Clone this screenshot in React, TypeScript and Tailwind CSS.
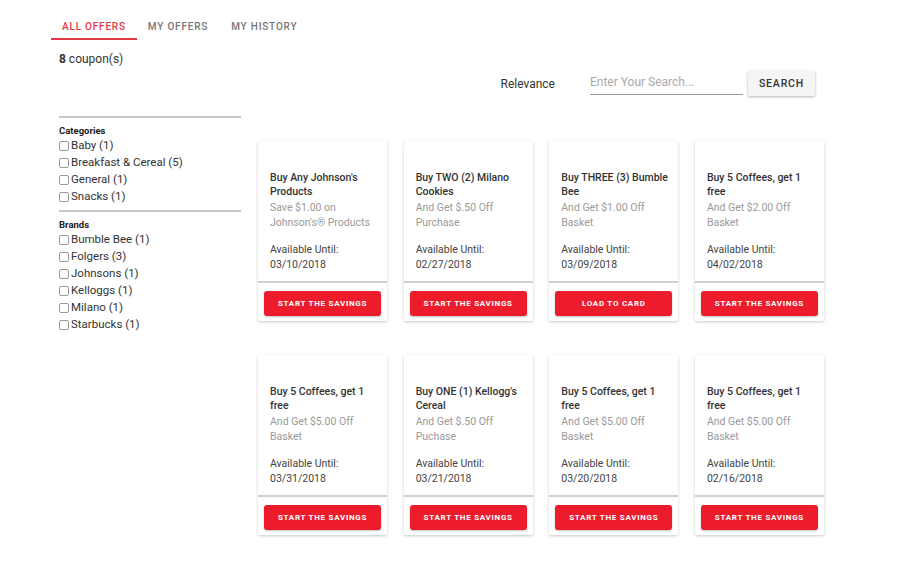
import React from 'react';

const categories = ['Baby (1)', 'Breakfast & Cereal (5)', 'General (1)', 'Snacks (1)'];
const brands = ['Bumble Bee (1)', 'Folgers (3)', 'Johnsons (1)', 'Kelloggs (1)', 'Milano (1)', 'Starbucks (1)'];

const coupons = [
  { title: "Buy Any Johnson's Products", desc: "Save $1.00 on Johnson's® Products", date: '03/10/2018', action: 'START THE SAVINGS' },
  { title: 'Buy TWO (2) Milano Cookies', desc: 'And Get $.50 Off Purchase', date: '02/27/2018', action: 'START THE SAVINGS' },
  { title: 'Buy THREE (3) Bumble Bee', desc: 'And Get $1.00 Off Basket', date: '03/09/2018', action: 'LOAD TO CARD' },
  { title: 'Buy 5 Coffees, get 1 free', desc: 'And Get $2.00 Off Basket', date: '04/02/2018', action: 'START THE SAVINGS' },
  { title: 'Buy 5 Coffees, get 1 free', desc: 'And Get $5.00 Off Basket', date: '03/31/2018', action: 'START THE SAVINGS' },
  { title: "Buy ONE (1) Kellogg's Cereal", desc: 'And Get $.50 Off Puchase', date: '03/21/2018', action: 'START THE SAVINGS' },
  { title: 'Buy 5 Coffees, get 1 free', desc: 'And Get $5.00 Off Basket', date: '03/20/2018', action: 'START THE SAVINGS' },
  { title: 'Buy 5 Coffees, get 1 free', desc: 'And Get $5.00 Off Basket', date: '02/16/2018', action: 'START THE SAVINGS' },
];

function FilterList({ title, items }: { title: string; items: string[] }) {
  return (
    <div className="border-t-2 border-[#c8c8c8] pt-[6px] pb-[5px]">
      <div className="text-[9.5px] font-bold leading-[13px] text-[#222]">{title}</div>
      {items.map((item) => (
        <label key={item} className="flex h-[17px] items-center gap-[2px] text-[11.5px] text-[#333]">
          <span className="h-[10px] w-[10px] rounded-[2px] border border-[#9a9a9a] bg-white" />
          {item}
        </label>
      ))}
    </div>
  );
}

function CouponCard({ title, desc, date, action }: (typeof coupons)[number]) {
  return (
    <div className="flex h-[180px] flex-col rounded-[2px] bg-white shadow-[0_1px_3px_rgba(0,0,0,0.22)]">
      <div className="flex-1 pl-[12px] pr-[8px] pt-[30px] text-[10.5px]">
        <div className="h-[28px] font-medium leading-[14px] text-[#333]">{title}</div>
        <div className="mt-[1px] h-[30px] leading-[15px] text-[#999]">{desc}</div>
        <div className="mt-[12px] leading-[15px] text-[#444]">Available Until:</div>
        <div className="leading-[15px] text-[#444]">{date}</div>
      </div>
      <div className="border-t-2 border-[#d0d0d0] px-[6px] pt-[6px] pb-[5px]">
        <button className="h-[25px] w-full rounded-[3px] bg-[#ec1c2d] text-[8px] font-bold tracking-[0.09em] text-white shadow-[0_1px_2px_rgba(0,0,0,0.25)]">
          {action}
        </button>
      </div>
    </div>
  );
}

export default function App() {
  return (
    <div className="h-[569px] w-[900px] bg-white font-['Roboto',sans-serif] text-[#333]">
      {/* Tabs */}
      <div className="flex pl-[51px] pt-[20px]">
        <div className="border-b-2 border-[#e53945] px-[11px] pb-[4px] text-[10px] font-medium leading-[14px] tracking-[0.08em] text-[#e53945]">
          ALL OFFERS
        </div>
        <div className="px-[11px] pb-[4px] text-[10px] font-medium leading-[14px] tracking-[0.08em] text-[#777]">MY OFFERS</div>
        <div className="px-[12px] pb-[4px] text-[10px] font-medium leading-[14px] tracking-[0.08em] text-[#777]">MY HISTORY</div>
      </div>

      <div className="pl-[59px]">
        <div className="mt-[11px] text-[12px] leading-[16px]">
          <span className="font-bold">8</span> coupon(s)
        </div>

        {/* Sort + search */}
        <div className="mt-[4px] flex w-[756px] items-center justify-end">
          <span className="mr-[35px] text-[12px] text-[#333]">Relevance</span>
          <div className="w-[153px] border-b border-[#999] pb-[3px] text-[12px] text-[#aaa]">Enter Your Search...</div>
          <button className="ml-[5px] h-[25px] w-[67px] rounded-[2px] bg-[#f5f5f5] text-[10.5px] font-medium tracking-[0.08em] text-[#333] shadow-[0_1px_3px_rgba(0,0,0,0.3)]">
            SEARCH
          </button>
        </div>

        <div className="mt-[19px] flex gap-[17px]">
          {/* Filters */}
          <div className="w-[182px] shrink-0 pt-[1px]">
            <FilterList title="Categories" items={categories} />
            <FilterList title="Brands" items={brands} />
          </div>

          {/* Coupons */}
          <div className="grid w-[566px] grid-cols-4 gap-x-[16.5px] gap-y-[34px] pt-[26px]">
            {coupons.map((c, i) => (
              <CouponCard key={i} {...c} />
            ))}
          </div>
        </div>
      </div>
    </div>
  );
}
